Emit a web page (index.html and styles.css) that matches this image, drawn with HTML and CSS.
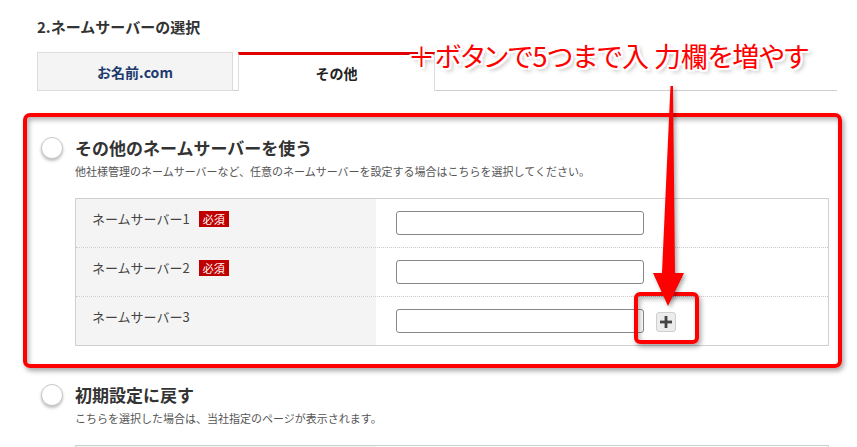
FILE: index.html
```html
<!DOCTYPE html>
<html lang="ja">
<head>
<meta charset="utf-8">
<title>ネームサーバーの選択</title>
<link rel="stylesheet" href="styles.css">
</head>
<body>
<div class="page">
  <h2 class="title">2.ネームサーバーの選択</h2>
  <div class="tabs">
    <div class="tab">お名前.com</div>
    <div class="tab active">その他</div>
  </div>
  <div class="options">
    <section class="option">
      <span class="radio"></span>
      <div class="option-body">
        <h3 class="option-title">その他のネームサーバーを使う</h3>
        <p class="option-desc">他社様管理のネームサーバーなど、任意のネームサーバーを設定する場合はこちらを選択してください。</p>
        <div class="ns-table">
          <div class="ns-row">
            <div class="ns-label"><span>ネームサーバー1</span><span class="req">必須</span></div>
            <div class="ns-field"><input class="ns-input" type="text"></div>
          </div>
          <div class="ns-row">
            <div class="ns-label"><span>ネームサーバー2</span><span class="req">必須</span></div>
            <div class="ns-field"><input class="ns-input" type="text"></div>
          </div>
          <div class="ns-row">
            <div class="ns-label"><span>ネームサーバー3</span></div>
            <div class="ns-field"><input class="ns-input" type="text"><button class="add-btn" type="button"><svg width="12" height="12" viewBox="0 0 12 12"><rect x="4.6" y="0" width="2.8" height="12" fill="#444"/><rect x="0" y="4.6" width="12" height="2.8" fill="#444"/></svg></button></div>
          </div>
        </div>
      </div>
    </section>
    <section class="option">
      <span class="radio"></span>
      <div class="option-body">
        <h3 class="option-title">初期設定に戻す</h3>
        <p class="option-desc">こちらを選択した場合は、当社指定のページが表示されます。</p>
        <div class="ns-table">
          <div class="ns-row">
            <div class="ns-label"></div>
            <div class="ns-field"></div>
          </div>
        </div>
      </div>
    </section>
  </div>
</div>

<div class="callout-box"></div>
<div class="callout-small"></div>
<svg class="arrow" width="857" height="447" viewBox="0 0 857 447">
  <polygon points="670.5,86 673,86 675,273 684,273 668,306 653,273 662,273" fill="#ff0000"/>
</svg>
<div class="callout-text">＋ボタンで5つまで入&#8201;力欄を増やす</div>
</body>
</html>
```

FILE: styles.css
```css
html, body {
  margin: 0;
  height: 447px;
  overflow: hidden;
  background: #fff;
}
body {
  position: relative;
  font-family: "Noto Sans CJK JP", "Noto Sans", sans-serif;
  color: #333;
}
.page {
  width: 800px;
  padding: 17px 0 0 37px;
}
.title {
  margin: 0;
  font-size: 15px;
  font-weight: bold;
  line-height: 20px;
  color: #333;
}
.tabs {
  display: flex;
  align-items: flex-end;
  gap: 5px;
  height: 38px;
  margin-top: 15px;
  border-bottom: 1px solid #d0d0d0;
}
.tab {
  box-sizing: border-box;
  width: 196px;
  height: 39px;
  margin-bottom: -1px;
  display: flex;
  align-items: center;
  justify-content: center;
  background: #f4f4f4;
  border: 1px solid #dcdcdc;
  color: #1d3a6e;
  font-size: 14px;
  font-weight: bold;
}
.tab.active {
  width: 197px;
  background: #fff;
  border-top: 3px solid #e00000;
  border-bottom: none;
  color: #222;
}
.options {
  margin-top: 45px;
}
.option {
  display: flex;
  align-items: flex-start;
}
.option + .option {
  margin-top: 37px;
}
.radio {
  flex: none;
  box-sizing: border-box;
  width: 22px;
  height: 22px;
  margin: 1px 12px 0 4px;
  border-radius: 50%;
  border: 1px solid #c8c8c8;
  background: #fff;
  box-shadow: 0 2px 3px rgba(0, 0, 0, 0.25);
}
.option-body {
  width: 754px;
}
.option-title {
  margin: 0;
  font-size: 17px;
  font-weight: bold;
  line-height: 24px;
  color: #333;
}
.option-desc {
  margin: 3px 0 0;
  font-size: 11px;
  line-height: 16px;
  color: #555;
}
.ns-table {
  margin-top: 19px;
  border: 1px solid #d0d0d0;
}
.ns-row {
  display: flex;
  height: 48px;
  border-bottom: 1px dotted #c8c8c8;
}
.ns-row:last-child {
  border-bottom: none;
}
.ns-label {
  box-sizing: border-box;
  width: 300px;
  padding: 12px 0 0 16px;
  background: #f4f4f4;
  display: flex;
  align-items: flex-start;
  gap: 9px;
  font-size: 13px;
  line-height: 16px;
  color: #444;
}
.req {
  height: 16px;
  padding: 0 4px;
  background: #c00000;
  color: #fff;
  font-size: 11px;
  line-height: 16px;
}
.ns-field {
  flex: 1;
  display: flex;
  align-items: center;
  padding-left: 20px;
}
.ns-input {
  box-sizing: border-box;
  width: 248px;
  height: 24px;
  margin: 0;
  border: 1px solid #888;
  border-radius: 3px;
  background: #fff;
}
.add-btn {
  box-sizing: border-box;
  width: 20px;
  height: 20px;
  margin: 1px 0 0 12px;
  padding: 0;
  display: flex;
  align-items: center;
  justify-content: center;
  background: #ececec;
  border: 1px solid #cfcfcf;
  border-radius: 3px;
}
.callout-box,
.callout-small {
  position: absolute;
  box-sizing: border-box;
  border: 4px solid #ff0000;
  border-radius: 7px;
  box-shadow: 2px 3px 5px rgba(0, 0, 0, 0.35), inset 2px 3px 5px rgba(0, 0, 0, 0.3);
  pointer-events: none;
}
.callout-box {
  left: 23px;
  top: 113px;
  width: 819px;
  height: 255px;
}
.callout-small {
  left: 634px;
  top: 292px;
  width: 65px;
  height: 52px;
  border-radius: 6px;
}
.arrow {
  position: absolute;
  left: 0;
  top: 0;
  pointer-events: none;
  filter: drop-shadow(2px 2px 2px rgba(0, 0, 0, 0.35));
}
.callout-text {
  position: absolute;
  left: 408px;
  top: 40px;
  font-size: 27px;
  line-height: 32px;
  font-weight: 400;
  letter-spacing: -0.2px;
  font-feature-settings: "palt" 1;
  color: #ff0000;
  white-space: nowrap;
  text-shadow:
    2px 0 0 #fff, -2px 0 0 #fff, 0 2px 0 #fff, 0 -2px 0 #fff,
    2px 2px 0 #fff, -2px -2px 0 #fff, 2px -2px 0 #fff, -2px 2px 0 #fff,
    3px 3px 4px rgba(0, 0, 0, 0.35);
}
```
